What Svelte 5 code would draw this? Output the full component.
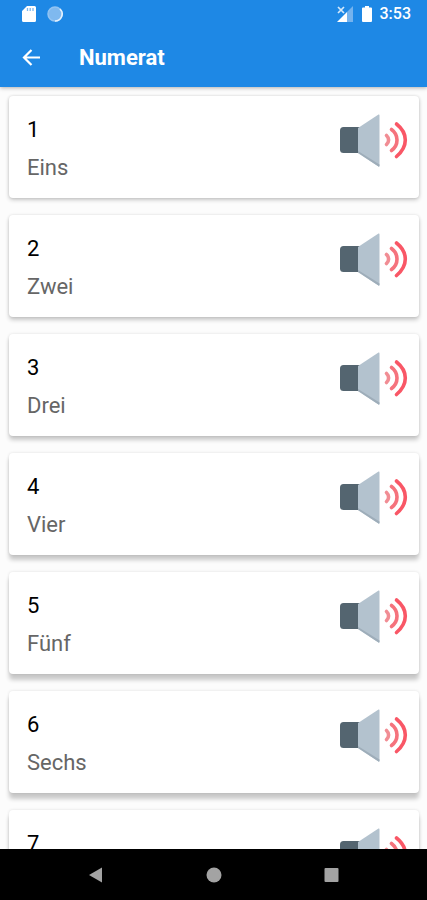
<script lang="ts">
    type Entry = { id: number; word: string }

    const numbers: Entry[] = [
        { id: 1, word: "Eins" },
        { id: 2, word: "Zwei" },
        { id: 3, word: "Drei" },
        { id: 4, word: "Vier" },
        { id: 5, word: "Fünf" },
        { id: 6, word: "Sechs" },
        { id: 7, word: "Sieben" }
    ]
</script>

<div class="screen">
    <header>
        <div class="status">
            <svg width="14" height="16" viewBox="0 0 14 16">
                <path d="M5 0h7.500a1.500 1.500 0 0 1 1.500 1.500v13a1.500 1.500 0 0 1-1.500 1.500H1.500A1.500 1.500 0 0 1 0 14.500V5z" fill="#fff" />
                <path d="M5.500 2v3M8.200 2v3M11 2v3" stroke="#7db8f0" stroke-width="1.300" />
            </svg>
            <svg class="sync" width="16" height="16" viewBox="0 0 16 16">
                <circle cx="8" cy="8" r="7" fill="#7fb9ef" stroke="#93c4f2" stroke-width="1.500" />
                <path d="M13 3a7 7 0 0 1-5 12" fill="none" stroke="#e4f1fd" stroke-width="1.600" />
            </svg>
            <svg class="signal" width="16" height="16" viewBox="0 0 16 16">
                <path d="M16 0v16H10V6z" fill="#75b3ee" />
                <path d="M10 6v10H0z" fill="#fff" />
                <path d="M1 1l6 6M7 1L1 7" stroke="#d5e9fb" stroke-width="1.700" />
            </svg>
            <svg width="10" height="16" viewBox="0 0 10 16">
                <path d="M3 0h4v1.500h2a1 1 0 0 1 1 1v12.500a1 1 0 0 1-1 1H1a1 1 0 0 1-1-1V2.500a1 1 0 0 1 1-1h2z" fill="#fff" />
            </svg>
            <span class="time">3:53</span>
        </div>
        <div class="toolbar">
            <button class="back" aria-label="Back">
                <svg width="18" height="18" viewBox="0 0 18 18" fill="none" stroke="#fff" stroke-width="2.200">
                    <path d="M18 8.500H2M9.500 1L2 8.500l7.500 7.500" />
                </svg>
            </button>
            <h1>Numerat</h1>
        </div>
    </header>

    <main>
        {#each numbers as { id, word }, i}
            <!-- shadow grows towards the bottom of the list -->
            <section class="card" style:--lift="{Math.min(i + 2, 6)}px">
                <div class="words">
                    <h2>{id}</h2>
                    <p>{word}</p>
                </div>
                <button class="play" aria-label={"Play " + word}>
                    <svg width="68" height="54" viewBox="0 0 68 54">
                        <rect x="0" y="13" width="24" height="26" rx="3.500" fill="#546570" />
                        <path d="M18 14L38.500 0.500Q39.500 0 39.500 1.500V51.500Q39.500 53 38.500 52.500L18 39z" fill="#b3c2ce" />
                        <path d="M18 37L39.500 50.500V51.500Q39.500 53 38.500 52.500L18 39z" fill="#9eadb9" />
                        <g fill="none" stroke-width="3.600" stroke-linecap="round">
                            <path d="M56.500 10Q65.300 17 65.300 26T56.500 42.500" stroke="#f95766" />
                            <path d="M51.500 15.500Q57 19.500 57 26T51.500 36.500" stroke="#f5737d" />
                            <path d="M46.500 21.500Q48.600 23.500 48.600 26T46.500 30.500" stroke="#f18d94" />
                        </g>
                    </svg>
                </button>
            </section>
        {/each}
    </main>

    <nav>
        <button aria-label="Back">
            <svg width="16" height="16" viewBox="0 0 16 16"><path d="M14 0.500v15L1 8z" fill="#a3a3a3" /></svg>
        </button>
        <button aria-label="Home">
            <svg width="16" height="16" viewBox="0 0 16 16"><circle cx="8" cy="8" r="7.500" fill="#a3a3a3" /></svg>
        </button>
        <button aria-label="Recent apps">
            <svg width="16" height="16" viewBox="0 0 16 16"><rect x="0.500" y="1" width="14" height="14" rx="1" fill="#a3a3a3" /></svg>
        </button>
    </nav>
</div>

<style>
    :global(body) {
        margin: 0;
    }
    .screen {
        height: 100vh;
        display: flex;
        flex-direction: column;
        background: #fcfcfc;
        font-family: Roboto, sans-serif;
    }
    h1,
    h2,
    p {
        margin: 0;
    }
    button {
        display: flex;
        padding: 0;
        border: none;
        background: none;
        cursor: pointer;
    }
    header {
        flex: none;
        z-index: 1;
        background: #1e88e5;
        color: #fff;
        box-shadow: 0 1px 4px rgba(0, 0, 0, 0.3);
    }
    .status {
        display: flex;
        align-items: center;
        height: 28px;
        padding: 0 16px 0 22px;
    }
    .sync {
        margin-left: 11px;
    }
    .signal {
        margin-left: auto;
        margin-right: 9px;
    }
    .time {
        margin-left: 8px;
        font-size: 16px;
        line-height: 20px;
        font-weight: 500;
    }
    .toolbar {
        display: flex;
        align-items: center;
        gap: 39px;
        height: 59px;
        padding: 0 22px;
    }
    h1 {
        font-size: 22px;
        line-height: 30px;
        font-weight: 700;
    }
    main {
        flex: 1;
        min-height: 0;
        overflow-y: auto;
        scrollbar-width: none;
        padding: 9px 8px 0 9px;
    }
    .card {
        display: flex;
        justify-content: space-between;
        align-items: flex-start;
        box-sizing: border-box;
        height: 102px;
        margin-bottom: 17px;
        padding: 18px 11px 0 18px;
        border-radius: 4px;
        background: #fff;
        box-shadow:
            0 var(--lift) 4px rgba(0, 0, 0, 0.2),
            0 0 3px rgba(0, 0, 0, 0.12);
    }
    h2 {
        font-size: 22px;
        line-height: 32px;
        font-weight: 400;
        color: #000;
    }
    .words p {
        margin-top: 6px;
        font-size: 22px;
        line-height: 32px;
        color: #666;
    }
    nav {
        flex: none;
        display: flex;
        align-items: center;
        justify-content: center;
        gap: 102px;
        height: 51px;
        background: #000;
    }
</style>
